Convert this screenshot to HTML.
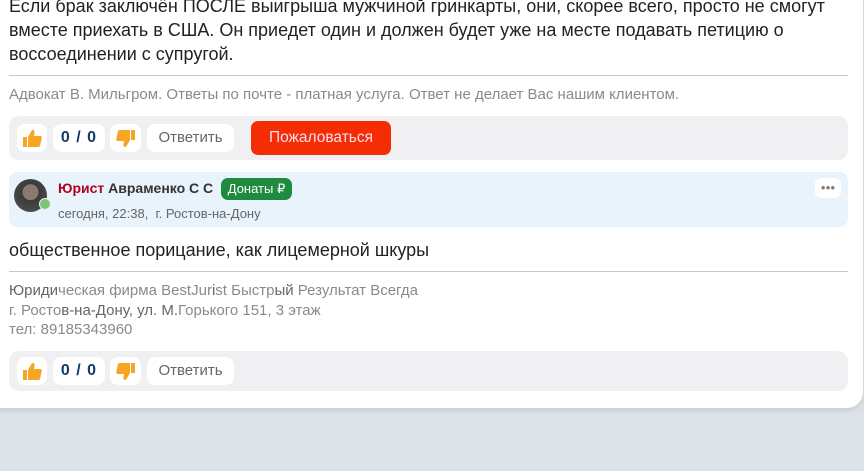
<!DOCTYPE html>
<html><head><meta charset="utf-8"><style>
*{box-sizing:border-box;margin:0;padding:0}
body{width:864px;height:471px;overflow:hidden;background:#dde1e8;font-family:"Liberation Sans","Noto Sans CJK SC",sans-serif;position:relative}
.card{position:absolute;left:-20px;top:-30px;width:883px;height:438px;background:#fff;border-radius:0 0 16px 16px;box-shadow:0 2px 6px rgba(0,0,0,.1)}
.t{position:absolute;left:9px;font-size:18px;color:#222;line-height:24px;white-space:nowrap}
.hr{position:absolute;left:9px;width:839px;height:1px;background:#c8c8c8}
.sig{position:absolute;left:9px;font-size:15px;color:#8a8a8a;line-height:19.5px;white-space:nowrap}
.sig b{font-weight:normal;color:#666}
.bar{position:absolute;left:9px;width:839px;height:44px;background:#f0f0f2;border-radius:10px}
.btn{position:absolute;top:8px;height:28px;background:#fff;border-radius:8px;font-size:15px;color:#666;text-align:center;line-height:28px}
.cnt{font-weight:bold;color:#123a6b;font-size:16px;letter-spacing:1px}
.red{position:absolute;left:242px;top:5px;width:140px;height:34px;background:#f52d05;border-radius:7px;color:#fde;font-size:15.5px;text-align:center;line-height:34px}
.auth{position:absolute;left:9px;top:172px;width:839px;height:55px;background:#e8f3fc;border-radius:8px}
</style></head><body>
<div class="card"></div>
<div class="t" style="top:-6px">Если брак заключён ПОСЛЕ выигрыша мужчиной гринкарты, они, скорее всего, просто не смогут</div>
<div class="t" style="top:18px">вместе приехать в США. Он приедет один и должен будет уже на месте подавать петицию о</div>
<div class="t" style="top:42px">воссоединении с супругой.</div>
<div class="hr" style="top:75px"></div>
<div class="sig" style="top:85px">Адвокат В. Мильгром. Ответы по почте - платная услуга. Ответ не делает Вас нашим клиентом.</div>
<div class="bar" style="top:116px">
 <div class="btn" style="left:8px;width:30px"><svg width="22" height="20" viewBox="0 0 22 20" style="margin-top:4px"><path d="M2 9h4v10H2zM7 9l4-7c2 0 3 1 2.5 3L13 8h6c1.5 0 2 1 1.7 2.3l-1.5 7c-.3 1-1 1.7-2 1.7H7z" fill="#f5a623"/></svg></div>
 <div class="btn cnt" style="left:44px;width:52px">0 / 0</div>
 <div class="btn" style="left:101px;width:31px"><svg width="22" height="20" viewBox="0 0 22 20" style="margin-top:5px;transform:scaleY(-1)"><path d="M2 9h4v10H2zM7 9l4-7c2 0 3 1 2.5 3L13 8h6c1.5 0 2 1 1.7 2.3l-1.5 7c-.3 1-1 1.7-2 1.7H7z" fill="#f5a623" transform="scale(-1,1) translate(-22,0)"/></svg></div>
 <div class="btn" style="left:138px;width:87px">Ответить</div>
 <div class="red">Пожаловаться</div>
</div>
<div class="auth">
 <div style="position:absolute;left:5px;top:7px;width:33px;height:33px;border-radius:50%;background:radial-gradient(circle at 50% 40%,#8a7a70 0 30%,#3a3a3a 32%,#555 100%)"></div>
 <div style="position:absolute;left:30px;top:26px;width:12px;height:12px;border-radius:50%;background:#7cc576;border:1.5px solid #e8f3fc"></div>
 <div style="position:absolute;left:49px;top:8px;font-size:14px;font-weight:bold;white-space:nowrap"><span style="color:#b3001b">Юрист</span> <span style="color:#333">Авраменко С С</span></div>
 <div style="position:absolute;left:212px;top:6px;width:71px;height:22px;background:#1f8b3f;border-radius:7px;color:#fff;font-size:13px;line-height:22px;text-align:center">Донаты ₽</div>
 <div style="position:absolute;left:49px;top:34px;font-size:13px;color:#666;white-space:nowrap">сегодня, 22:38,&nbsp; г. Ростов-на-Дону</div>
 <div style="position:absolute;left:806px;top:6px;width:26px;height:20px;background:#fff;border-radius:6px;color:#777;font-size:8px;text-align:center;line-height:20px;letter-spacing:0px">●●●</div>
</div>
<div class="t" style="top:238px">общественное порицание, как лицемерной шкуры</div>
<div class="hr" style="top:271px"></div>
<div class="sig" style="top:281px"><b>Юриди</b>ческая фирма BestJur<b>i</b>st Быстр<b>ый</b> Результат Всегда</div>
<div class="sig" style="top:301px">г. Росто<b>в-на-Дону, ул. М.</b>Горького 151, 3 этаж</div>
<div class="sig" style="top:320px">тел: 89185343960</div>
<div class="bar" style="top:351px;height:40px">
 <div class="btn" style="left:8px;top:6px;width:30px"><svg width="22" height="20" viewBox="0 0 22 20" style="margin-top:4px"><path d="M2 9h4v10H2zM7 9l4-7c2 0 3 1 2.5 3L13 8h6c1.5 0 2 1 1.7 2.3l-1.5 7c-.3 1-1 1.7-2 1.7H7z" fill="#f5a623"/></svg></div>
 <div class="btn cnt" style="left:44px;top:6px;width:52px">0 / 0</div>
 <div class="btn" style="left:101px;top:6px;width:31px"><svg width="22" height="20" viewBox="0 0 22 20" style="margin-top:5px;transform:scaleY(-1)"><path d="M2 9h4v10H2zM7 9l4-7c2 0 3 1 2.5 3L13 8h6c1.5 0 2 1 1.7 2.3l-1.5 7c-.3 1-1 1.7-2 1.7H7z" fill="#f5a623" transform="scale(-1,1) translate(-22,0)"/></svg></div>
 <div class="btn" style="left:138px;top:6px;width:87px">Ответить</div>
</div>
</body></html>
